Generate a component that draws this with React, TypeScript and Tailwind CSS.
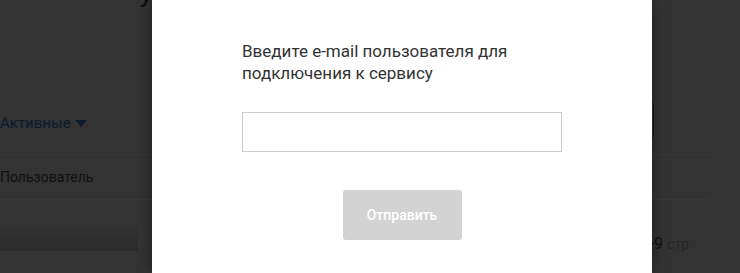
import React from 'react';

const App: React.FC = () => {
  return (
    <div className="relative w-[740px] h-[273px] overflow-hidden bg-[#333333] font-['Roboto',sans-serif]">
      {/* Page behind the overlay (already dimmed) */}
      <div className="w-[710px] flex flex-col">
        <div className="h-[100px] pl-[137px]">
          <h1 className="-mt-[18px] text-[28px] leading-[32px] text-[#0f0f0f] whitespace-nowrap">Управление пользователями</h1>
        </div>

        <div className="h-[55px] flex items-center justify-between border-b border-[#383838]">
          <div className="flex items-center gap-[4px] text-[15px] text-[#0c1c2c] pb-[8px]">
            <span>Активные</span>
            <span className="w-0 h-0 border-l-[6px] border-r-[6px] border-t-[7px] border-l-transparent border-r-transparent border-t-[#0c1c2c]" />
          </div>
          <button className="mr-[56px] mb-[14px] w-[150px] h-[36px] rounded-[4px] border border-[#0e1822]" />
        </div>

        <div className="h-[45px] flex items-center border-b border-[#383838]">
          <span className="text-[14px] text-[#111111]">Пользователь</span>
        </div>

        <div className="h-[73px] flex items-start justify-between pt-[28px]">
          <div className="w-[138px] h-[23px] bg-gradient-to-b from-[#313131] to-[#2b2b2b]" />
          <span className="mr-[21px] mt-[4px] text-[16px] text-[#121212]">1-9 <span className="text-[14px] text-[#262626]">стр</span></span>
        </div>
      </div>

      {/* Modal */}
      <div className="absolute left-[152px] top-0 w-[500px] h-[273px] bg-white shadow-[0_0_14px_rgba(0,0,0,0.45)] flex flex-col items-center pt-[40px]">
        <div className="w-[320px] flex flex-col">
          <p className="text-[17px] leading-[22px] text-[#333333]">
            Введите e-mail пользователя для подключения к сервису
          </p>
          <input className="mt-[28px] w-[320px] h-[40px] border border-[#cccccc] outline-none px-3 text-[14px]" />
          <button className="mt-[38px] self-center w-[119px] h-[50px] rounded-[3px] bg-[#d3d3d3] text-white text-[14px] font-medium">
            Отправить
          </button>
        </div>
      </div>
    </div>
  );
};

export default App;
